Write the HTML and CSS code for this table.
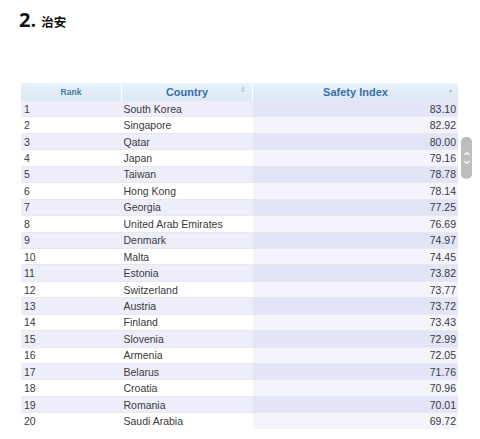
FILE: index.html
```html
<!DOCTYPE html>
<html>
<head>
<meta charset="utf-8">
<link rel="stylesheet" href="styles.css">
</head>
<body>
<div class="page">
  <h2 class="title"><span class="num">2.</span><span class="zh">治安</span></h2>
  <div class="table-wrap">
    <table class="rank-table">
      <thead>
        <tr>
          <th class="c-rank">Rank</th>
          <th class="c-country">Country<span class="sort">&#8661;</span></th>
          <th class="c-index">Safety Index<span class="sort down">&#9662;</span></th>
        </tr>
      </thead>
      <tbody>
        <tr><td>1</td><td>South Korea</td><td class="v">83.10</td></tr>
        <tr><td>2</td><td>Singapore</td><td class="v">82.92</td></tr>
        <tr><td>3</td><td>Qatar</td><td class="v">80.00</td></tr>
        <tr><td>4</td><td>Japan</td><td class="v">79.16</td></tr>
        <tr><td>5</td><td>Taiwan</td><td class="v">78.78</td></tr>
        <tr><td>6</td><td>Hong Kong</td><td class="v">78.14</td></tr>
        <tr><td>7</td><td>Georgia</td><td class="v">77.25</td></tr>
        <tr><td>8</td><td>United Arab Emirates</td><td class="v">76.69</td></tr>
        <tr><td>9</td><td>Denmark</td><td class="v">74.97</td></tr>
        <tr><td>10</td><td>Malta</td><td class="v">74.45</td></tr>
        <tr><td>11</td><td>Estonia</td><td class="v">73.82</td></tr>
        <tr><td>12</td><td>Switzerland</td><td class="v">73.77</td></tr>
        <tr><td>13</td><td>Austria</td><td class="v">73.72</td></tr>
        <tr><td>14</td><td>Finland</td><td class="v">73.43</td></tr>
        <tr><td>15</td><td>Slovenia</td><td class="v">72.99</td></tr>
        <tr><td>16</td><td>Armenia</td><td class="v">72.05</td></tr>
        <tr><td>17</td><td>Belarus</td><td class="v">71.76</td></tr>
        <tr><td>18</td><td>Croatia</td><td class="v">70.96</td></tr>
        <tr><td>19</td><td>Romania</td><td class="v">70.01</td></tr>
        <tr><td>20</td><td>Saudi Arabia</td><td class="v">69.72</td></tr>
      </tbody>
    </table>
    <div class="scroller">
      <svg width="10" height="40" viewBox="0 0 10 40">
        <path d="M2.5 17 L5 14.5 L7.5 17" fill="none" stroke="#fff" stroke-width="1.2"/>
        <path d="M2.5 23 L5 25.5 L7.5 23" fill="none" stroke="#fff" stroke-width="1.2"/>
      </svg>
    </div>
  </div>
</div>
</body>
</html>
```
FILE: styles.css
```css
html, body {
  margin: 0;
  padding: 0;
  background: #fff;
}
.page {
  width: 480px;
  height: 439px;
  overflow: hidden;
  font-family: "Liberation Sans", Arial, sans-serif;
}
.title {
  margin: 0;
  padding: 6px 0 0 19px;
  height: 74px;
  box-sizing: border-box;
  display: flex;
  align-items: baseline;
  color: #111;
}
.title .num {
  font-family: "Open Sans", "Noto Sans", sans-serif;
  font-size: 20px;
  font-weight: 700;
  margin-right: 5px;
}
.title .zh {
  font-family: "Noto Sans CJK SC", sans-serif;
  font-size: 12.5px;
  font-weight: 700;
}
.table-wrap {
  position: relative;
  margin: 9px 0 0 21px;
  width: 438px;
}
.rank-table {
  width: 437px;
  border-collapse: collapse;
  table-layout: fixed;
  font-size: 10.5px;
  color: #3a3a3a;
}
.rank-table th {
  height: 17px;
  padding: 0;
  background: linear-gradient(#e8f2fb, #dbe9f6);
  color: #3d6ea6;
  font-weight: 700;
  font-size: 11px;
  border-left: 1px solid #fff;
  position: relative;
  text-align: center;
}
.rank-table th:first-child { border-left: none; }
.rank-table th.c-rank {
  width: 100px;
  font-size: 8.5px;
  color: #5078a8;
}
.rank-table th.c-country { width: 130px; }
.rank-table .sort {
  position: absolute;
  right: 6px;
  top: 3px;
  font-size: 7px;
  color: #a8b8cc;
  font-weight: 400;
}
.rank-table .sort.down { top: 4px; font-size: 6px; }
.rank-table td {
  height: 16.45px;
  line-height: 12px;
  padding: 0 0 0 3px;
  border-top: 1px solid #e8e8ee;
  white-space: nowrap;
  box-sizing: border-box;
}
.rank-table td:nth-child(2) { padding-left: 2px; }
.rank-table td.v {
  text-align: right;
  padding: 0 2px 0 0;
}
.rank-table tbody tr:nth-child(odd) td { background: #eeeefb; }
.rank-table tbody tr:nth-child(even) td { background: #fff; }
.rank-table tbody tr:nth-child(odd) td.v { background: #e4e4f8; }
.rank-table tbody tr:nth-child(even) td.v { background: #f4f4fc; }
.scroller {
  position: absolute;
  left: 440px;
  top: 54px;
  width: 11px;
  height: 42px;
  border-radius: 5px;
  background: #bdbdbd;
  display: flex;
  align-items: center;
  justify-content: center;
}
```
